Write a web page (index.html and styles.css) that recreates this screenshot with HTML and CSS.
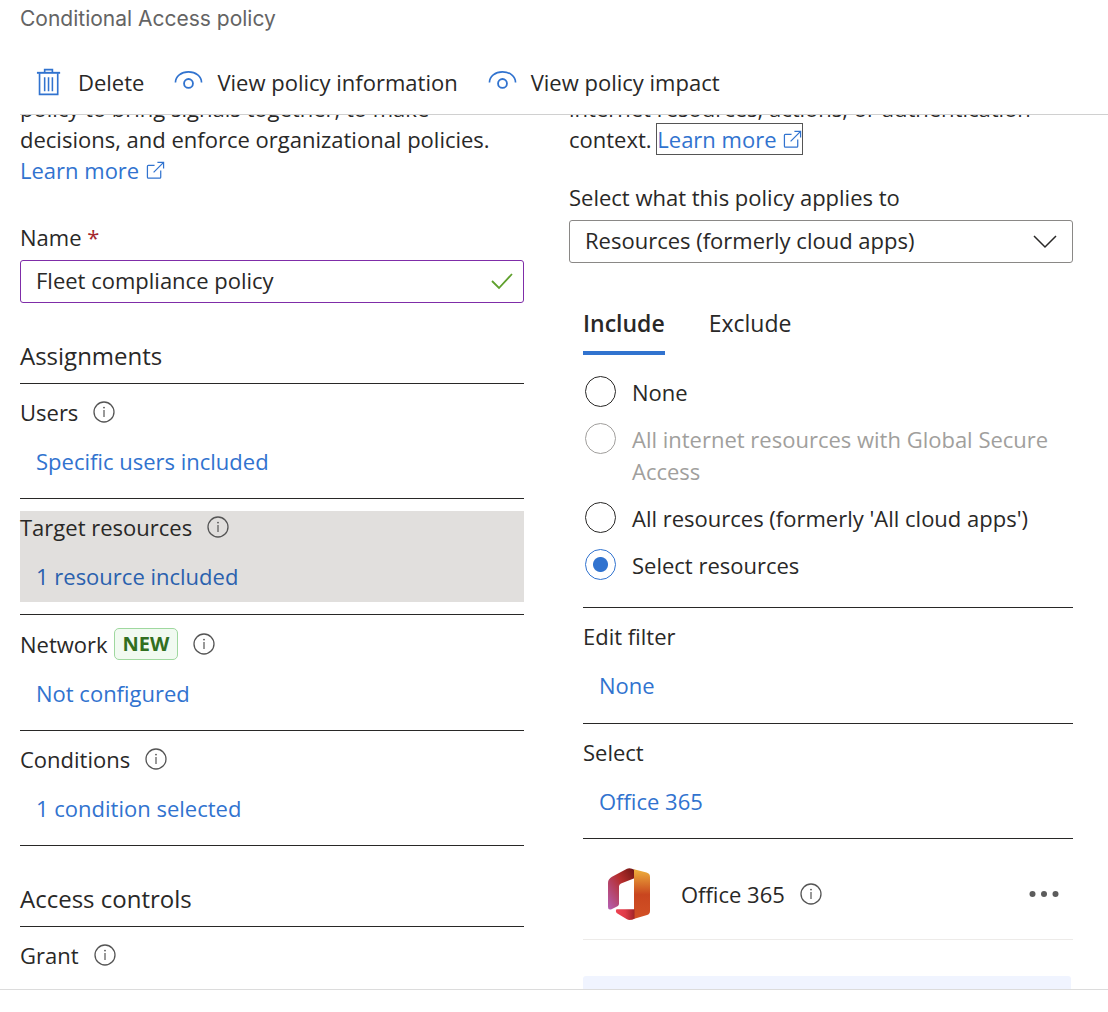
FILE: index.html
```html
<!DOCTYPE html>
<html lang="en">
<head>
    <meta charset="UTF-8">
    <meta name="viewport" content="width=device-width, initial-scale=1.0">
    <title>Conditional Access policy</title>
    <link rel="stylesheet" href="styles.css">
</head>
<body>
    <!-- shared icons -->
    <svg class="sprite" aria-hidden="true">
        <symbol id="info" viewBox="0 0 22 22">
            <circle cx="11" cy="11" r="10" fill="none" stroke="currentColor" stroke-width="1.3"/>
            <path d="M11 9v7" fill="none" stroke="currentColor" stroke-width="1.2"/>
            <circle cx="11" cy="6.6" r="0.9" fill="currentColor"/>
        </symbol>
        <symbol id="external" viewBox="0 0 20 20">
            <path d="M9 4.5H2.5q-1 0-1 1V17q0 1 1 1h12q1 0 1-1V10M12 1.5h6.5V8M18.5 1.5L8 12" fill="none" stroke="currentColor" stroke-width="1.3"/>
        </symbol>
        <symbol id="eye" viewBox="0 0 30 30">
            <path d="M1.5 15.5C1.5 9 7.5 4.5 15 4.5S28.5 9 28.5 15.5" fill="none" stroke="currentColor" stroke-width="1.7"/>
            <circle cx="15" cy="16.5" r="4.6" fill="none" stroke="currentColor" stroke-width="1.9"/>
        </symbol>
    </svg>

    <header class="page-header">
        <p class="subtitle">Conditional Access policy</p>
        <div class="toolbar">
            <button type="button">
                <svg class="tool-icon" viewBox="0 0 30 30" fill="none" stroke="currentColor">
                    <path d="M2 5.5h24" stroke-width="2"/>
                    <path d="M10 5V2.200h8V5M4.700 6v21.800h18.800V6" stroke-width="1.7"/>
                    <path d="M10 10v14.500M14 10v14.500M18 10v14.500" stroke-width="1.6"/>
                </svg>
                Delete
            </button>
            <button type="button"><svg class="tool-icon"><use href="#eye"/></svg>View policy information</button>
            <button type="button"><svg class="tool-icon"><use href="#eye"/></svg>View policy impact</button>
        </div>
    </header>

    <main class="content">
        <div class="column">
            <p class="intro">policy to bring signals together, to make<br>decisions, and enforce organizational policies.<br><a href="#">Learn more <svg class="external"><use href="#external"/></svg></a></p>

            <label class="field-label" for="policyName">Name <span class="required">*</span></label>
            <div class="field">
                <input class="control control-name" type="text" id="policyName" value="Fleet compliance policy">
                <svg class="field-icon check" viewBox="0 0 22 22"><path d="M1 11l7 7L21 4" fill="none" stroke="currentColor" stroke-width="1.8"/></svg>
            </div>

            <h2>Assignments</h2>
            <section class="setting">
                <div class="setting-body">
                    <div class="setting-title">Users <svg class="info"><use href="#info"/></svg></div>
                    <a href="#">Specific users included</a>
                </div>
            </section>
            <section class="setting">
                <div class="setting-body selected">
                    <div class="setting-title">Target resources <svg class="info"><use href="#info"/></svg></div>
                    <a href="#">1 resource included</a>
                </div>
            </section>
            <section class="setting">
                <div class="setting-body">
                    <div class="setting-title">Network <span class="badge">NEW</span> <svg class="info"><use href="#info"/></svg></div>
                    <a href="#">Not configured</a>
                </div>
            </section>
            <section class="setting">
                <div class="setting-body">
                    <div class="setting-title">Conditions <svg class="info"><use href="#info"/></svg></div>
                    <a href="#">1 condition selected</a>
                </div>
            </section>

            <h2>Access controls</h2>
            <section class="setting">
                <div class="setting-body">
                    <div class="setting-title">Grant <svg class="info"><use href="#info"/></svg></div>
                </div>
            </section>
        </div>

        <div class="column">
            <p class="intro intro-short">internet resources, actions, or authentication<br>context. <a class="focused" href="#">Learn more <svg class="external"><use href="#external"/></svg></a></p>

            <label class="field-label" for="appliesTo">Select what this policy applies to</label>
            <div class="field">
                <select class="control" id="appliesTo">
                    <option>Resources (formerly cloud apps)</option>
                </select>
                <svg class="field-icon" viewBox="0 0 24 24"><path d="M1 7l11 11L23 7" fill="none" stroke="currentColor" stroke-width="1.5"/></svg>
            </div>

            <div class="panel">
                <div class="tabs">
                    <button type="button" class="active">Include</button>
                    <button type="button">Exclude</button>
                </div>

                <div class="options">
                    <label><input type="radio" name="scope"><span>None</span></label>
                    <label class="disabled"><input type="radio" name="scope" disabled><span>All internet resources with Global Secure Access</span></label>
                    <label><input type="radio" name="scope"><span>All resources (formerly 'All cloud apps')</span></label>
                    <label><input type="radio" name="scope" checked><span>Select resources</span></label>
                </div>

                <section class="setting">
                    <div class="setting-body">
                        <div class="setting-title">Edit filter</div>
                        <a href="#">None</a>
                    </div>
                </section>
                <section class="setting">
                    <div class="setting-body">
                        <div class="setting-title">Select</div>
                        <a href="#">Office 365</a>
                    </div>
                </section>

                <div class="app">
                    <svg class="app-logo" viewBox="0 0 42 52">
                        <defs>
                            <linearGradient id="officeLeft" x1="1" y1="0" x2="0" y2="1">
                                <stop offset="0" stop-color="#6b1512"/>
                                <stop offset="0.4" stop-color="#b52d2c"/>
                                <stop offset="1" stop-color="#b560b5"/>
                            </linearGradient>
                            <linearGradient id="officeRight" x1="0" y1="0" x2="0" y2="1">
                                <stop offset="0" stop-color="#eeb03c"/>
                                <stop offset="0.5" stop-color="#c9461f"/>
                                <stop offset="1" stop-color="#d25126"/>
                            </linearGradient>
                            <linearGradient id="officeBottom" x1="0" y1="0" x2="1" y2="0">
                                <stop offset="0" stop-color="#ee4453"/>
                                <stop offset="0.5" stop-color="#df3b48"/>
                                <stop offset="1" stop-color="#a02427"/>
                            </linearGradient>
                        </defs>
                        <path d="M19 .8Q22-.5 27 2V10L13 15.500Q11 16.500 11 18.500V36Q11 37.500 9.500 38.300L3.500 41.200Q0 42.500 0 39V15Q0 11 4 8.800z" fill="url(#officeLeft)"/>
                        <path d="M26 1.300L38.500 4.600Q42 5.600 42 9V43Q42 46 39 47L23 51.800 26 47z" fill="url(#officeRight)"/>
                        <path d="M26.500 41.300V50.800L24.500 51.500Q21 52.500 18.500 51L9 45.300Q7 43.500 8.500 41.300z" fill="url(#officeBottom)"/>
                    </svg>
                    <span>Office 365</span>
                    <svg class="info"><use href="#info"/></svg>
                    <button type="button" class="more" aria-label="More">
                        <svg viewBox="0 0 30 8" fill="currentColor"><circle cx="3.5" cy="4" r="3"/><circle cx="15" cy="4" r="3"/><circle cx="26.5" cy="4" r="3"/></svg>
                    </button>
                </div>
                <div class="notice"></div>
            </div>
        </div>
    </main>

    <footer class="page-footer"></footer>
</body>
</html>
```

FILE: styles.css
```css
* {
    box-sizing: border-box;
}
body {
    margin: 0;
    height: 100vh;
    display: flex;
    flex-direction: column;
    overflow: hidden;
    font-family: "Open Sans", "Noto Sans", sans-serif;
    font-size: 22px;
    line-height: 32px;
    color: #292827;
    background-color: #fff;
}
p, h2 {
    margin: 0;
    font-weight: normal;
}
a {
    color: #3173cf;
    text-decoration: none;
}
button, input, select {
    margin: 0;
    font: inherit;
    color: inherit;
}
button {
    padding: 0;
    border: none;
    background: none;
    cursor: pointer;
}
svg {
    flex: none;
}
.sprite {
    display: none;
}

/* header */
.page-header {
    flex: none;
    margin-left: 20px;
    border-bottom: 1px solid #d0d0d0;
}
.subtitle {
    padding-top: 3px;
    font-family: Inter, sans-serif;
    font-size: 21px;
    color: #646464;
}
.toolbar {
    display: flex;
    gap: 30px;
    padding: 31px 0 16px 15px;
}
.toolbar button {
    display: flex;
    align-items: center;
    gap: 14px;
    white-space: nowrap;
}
.tool-icon {
    width: 29px;
    height: 30px;
    color: #3173cf;
}

/* two columns */
.content {
    flex: 1;
    min-height: 0;
    overflow: hidden;
    display: grid;
    grid-template-columns: 1fr 1fr;
    gap: 45px;
    padding: 0 35px 0 20px;
}
.column {
    min-width: 0;
    margin-top: -22px;
}
.intro {
    margin-bottom: 36px;
    line-height: 31px;
    white-space: nowrap;
}
.intro-short {
    margin-bottom: 27px;
}
.external {
    width: 19px;
    height: 19px;
    margin-left: 1px;
    vertical-align: -1px;
}
.focused {
    outline: 1px solid #555;
}
.field-label {
    display: block;
    margin-bottom: 8px;
    line-height: 30px;
}
.required {
    color: #a4262c;
}
.field {
    position: relative;
}
.control {
    display: block;
    width: 100%;
    height: 43px;
    padding: 0 50px 3px 15px;
    border: 1px solid #8a8886;
    border-radius: 3px;
    background-color: #fff;
    appearance: none;
}
.control-name {
    border-color: #7f2da8;
}
.field-icon {
    position: absolute;
    top: 9px;
    right: 16px;
    width: 24px;
    height: 24px;
    pointer-events: none;
}
.check {
    right: 11px;
    width: 22px;
    color: #5fa02d;
}
h2 {
    margin-top: 37px;
    padding-bottom: 11px;
    border-bottom: 1px solid #292827;
    font-size: 24px;
}
.setting {
    padding: 12px 0;
    border-bottom: 1px solid #292827;
}
.setting-body {
    padding-bottom: 9px;
}
.setting-body a {
    display: block;
    margin-top: 17px;
    padding-left: 16px;
}
.setting-title {
    display: flex;
    align-items: center;
    min-height: 32px;
}
.selected {
    padding-bottom: 10px;
    background-color: #e1dfdd;
}
.selected a {
    color: #2a61ae;
}
.info {
    width: 22px;
    height: 22px;
    margin-left: 15px;
    color: #555;
}
.badge {
    margin: 1px 0 0 6px;
    padding: 0 8px;
    border: 1px solid #9fd89f;
    border-radius: 5px;
    background-color: #f1faf1;
    font-size: 20px;
    font-weight: bold;
    line-height: 30px;
    color: #316f1f;
}

/* right column */
.panel {
    margin: 44px 0 0 14px;
}
.tabs {
    display: flex;
    gap: 44px;
    font-size: 23px;
}
.tabs button {
    padding-bottom: 12px;
    border-bottom: 4px solid transparent;
}
.tabs .active {
    border-color: #3173cf;
    font-weight: 600;
}
.options {
    display: grid;
    gap: 15px;
    padding: 21px 0 26px;
    border-bottom: 1px solid #292827;
}
.options + .setting {
    padding-bottom: 13px;
}
.options label {
    display: flex;
    gap: 16px;
    padding-left: 2px;
}
.options input {
    flex: none;
    width: 31px;
    height: 31px;
    border: 1px solid #292827;
    border-radius: 50%;
    appearance: none;
}
.options input:checked {
    border-color: #3173cf;
    background: radial-gradient(circle, #3173cf 7px, #fff 8px);
}
.options input:disabled {
    border-color: #a19f9d;
}
.options .disabled {
    color: #a19f9d;
}
.app {
    display: flex;
    align-items: center;
    height: 101px;
    padding: 10px 14px 0 25px;
    border-bottom: 1px solid #edebe9;
}
.app-logo {
    width: 42px;
    height: 52px;
    margin-right: 31px;
}
.more {
    display: flex;
    margin-left: auto;
    color: #5c5c5c;
}
.more svg {
    width: 30px;
    height: 8px;
}
.notice {
    height: 60px;
    margin: 36px 2px 0 0;
    border-radius: 3px;
    background-color: #f0f4ff;
}

.page-footer {
    flex: none;
    height: 23px;
    border-top: 1px solid #dcdcdc;
}
```
